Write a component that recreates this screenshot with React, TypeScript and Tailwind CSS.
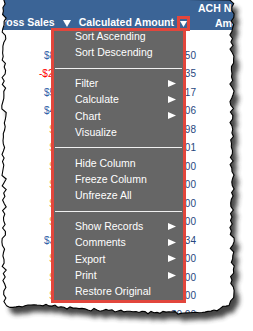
import React from "react";

// deterministic jitter so the torn edge is the same on every render
const rng = (seed: number) => () => {
	seed = (seed * 16807) % 2147483647;
	return seed / 2147483647;
};

const bottomBase = (x: number) => {
	const pts = [
		[0, 307],
		[40, 305],
		[80, 309],
		[130, 312],
		[200, 313],
		[215, 311],
		[222, 308],
		[233, 304],
	];
	for (let i = 1; i < pts.length; i++) {
		if (x <= pts[i][0]) {
			const [x0, y0] = pts[i - 1];
			const [x1, y1] = pts[i];
			return y0 + ((x - x0) / (x1 - x0)) * (y1 - y0);
		}
	}
	return 304;
};

const makePaper = () => {
	const r = rng(42);
	const pts: [number, number][] = [];
	for (let y = -3; y <= 305; y += 3.5) pts.push([4 + (r() - 0.5) * 4.5, y]);
	for (let x = 7; x <= 230; x += 3) pts.push([x, bottomBase(x) + (r() - 0.5) * 3]);
	for (let y = 301; y >= -3; y -= 3.5) pts.push([232 + (r() - 0.5) * 4.5, y]);
	return "M" + pts.map(([x, y]) => `${x.toFixed(1)} ${y.toFixed(1)}`).join(" L") + " Z";
};

const paper = makePaper();
const outside = "M0 0H253V331H0Z " + paper;

const rows = [
	{ left: "$8,412.50", lc: "text-[#3060a8]", lp: "pl-[44px]", right: "$1,482.50" },
	{ left: "-$2,130.85", lc: "text-[#ff0000]", lp: "pl-[39px]", right: "$2,210.35" },
	{ left: "$5,306.17", lc: "text-[#3060a8]", lp: "pl-[44px]", right: "$903.17" },
	{ left: "$4,760.06", lc: "text-[#3060a8]", lp: "pl-[44px]", right: "$1,114.06" },
	{ left: "$980.98", lc: "text-[#e8963c]", lp: "pl-[49.5px]", right: "$312.98" },
	{ left: "$640.01", lc: "text-[#e8963c]", lp: "pl-[49.5px]", right: "$155.01" },
	{ left: "$500.00", lc: "text-[#e8963c]", lp: "pl-[49.5px]", right: "$120.00" },
	{ left: "$500.00", lc: "text-[#e8963c]", lp: "pl-[49.5px]", right: "$120.00" },
	{ left: "$750.00", lc: "text-[#e8963c]", lp: "pl-[49.5px]", right: "$180.00" },
	{ left: "$750.00", lc: "text-[#e8963c]", lp: "pl-[49.5px]", right: "$180.00" },
	{ left: "$3,415.34", lc: "text-[#3060a8]", lp: "pl-[44px]", right: "$642.34" },
	{ left: "$400.00", lc: "text-[#e8963c]", lp: "pl-[49.5px]", right: "$96.00" },
	{ left: "$400.00", lc: "text-[#e8963c]", lp: "pl-[49.5px]", right: "$96.00" },
	{ left: "$250.00", lc: "text-[#e8963c]", lp: "pl-[49.5px]", right: "$60.00" },
	{ left: "$0.00", lc: "text-[#3060a8]", lp: "pl-[49.5px]", right: "$0.00" },
];

const groups = [
	[{ label: "Sort Ascending" }, { label: "Sort Descending" }],
	[
		{ label: "Filter", sub: true },
		{ label: "Calculate", sub: true },
		{ label: "Chart", sub: true },
		{ label: "Visualize" },
	],
	[{ label: "Hide Column" }, { label: "Freeze Column" }, { label: "Unfreeze All" }],
	[
		{ label: "Show Records", sub: true },
		{ label: "Comments", sub: true },
		{ label: "Export", sub: true },
		{ label: "Print", sub: true },
		{ label: "Restore Original" },
	],
];

const Down = () => (
	<svg width="8" height="7" viewBox="0 0 8 7">
		<polygon points="0,0 8,0 4,7" fill="#fff" />
	</svg>
);

const Right = () => (
	<svg width="8" height="7" viewBox="0 0 8 7">
		<polygon points="0,0 8,3.5 0,7" fill="#fff" />
	</svg>
);

const App = () => {
	return (
		<div className="relative w-[253px] h-[331px] overflow-hidden bg-white font-['Liberation_Sans',Arial,sans-serif]">
			<div className="bg-[#3b6496] h-[30px] text-white font-bold text-[10.5px] whitespace-nowrap">
				<div className="h-[16px] leading-[16px] pl-[198px]">ACH Name</div>
				<div className="h-[14px] flex items-center">
					<span className="-ml-[6px]">Gross Sales</span>
					<span className="ml-[8px] flex">
						<Down />
					</span>
					<span className="ml-[8px]">Calculated Amount</span>
					<span className="ml-[3px] w-[16px] h-[15px] mt-[1px] border-[3px] border-[#e2463c] flex items-center justify-center">
						<svg width="7" height="6" viewBox="0 0 7 6">
							<polygon points="0,0 7,0 3.5,6" fill="#fff" />
						</svg>
					</span>
					<span className="ml-[25px] mt-[2px]">Amount</span>
				</div>
			</div>

			<div className="pt-[16.5px] text-[10px]">
				{rows.map((row, i) => (
					<div key={i} className="flex h-[18.5px] leading-[18.5px] whitespace-nowrap">
						<div className={`w-[140px] ${row.lp} ${row.lc}`}>{row.left}</div>
						<div className="w-[56px] text-right text-[#27477e]">{row.right}</div>
					</div>
				))}
			</div>

			{/* column menu */}
			<div className="absolute left-[51px] top-[28px] w-[135px] bg-[#666666] border-[3px] border-[#e2463c] text-white text-[10.5px]">
				<div className="-mt-[3px]">
					{groups.map((group, gi) => (
						<div key={gi}>
							{gi > 0 && <div className="mx-[1px] mt-[7px] mb-[6.5px] h-px bg-[#f0f0f0]" />}
							{group.map((item) => (
								<div
									key={item.label}
									className="flex items-center justify-between h-[16.3px] leading-[16.3px] pl-[21px] pr-[7px] whitespace-nowrap"
								>
									<span>{item.label}</span>
									{item.sub && <Right />}
								</div>
							))}
						</div>
					))}
				</div>
			</div>

			{/* torn paper edge + shadow */}
			<svg className="absolute inset-0 pointer-events-none" width="253" height="331" viewBox="0 0 253 331">
				<defs>
					<clipPath id="outside">
						<path d={outside} clipRule="evenodd" />
					</clipPath>
					<filter id="blur" x="-10%" y="-10%" width="120%" height="120%">
						<feGaussianBlur stdDeviation="2.6" />
					</filter>
				</defs>
				<path d={outside} fill="#fff" fillRule="evenodd" />
				<g clipPath="url(#outside)">
					<path d={paper} fill="#333" opacity="0.9" transform="translate(5 7)" filter="url(#blur)" />
				</g>
				<path d={paper} fill="none" stroke="#000" strokeWidth="1.1" />
			</svg>
		</div>
	);
};

export default App;
